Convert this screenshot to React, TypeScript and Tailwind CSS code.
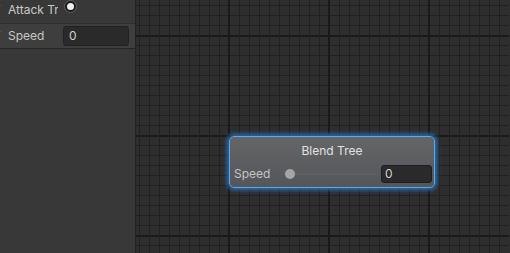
import React from 'react';

const CANVAS_X = 137;
const W = 510 - CANVAS_X;
const H = 253;

function Grid() {
  const xs: number[] = [];
  for (let x = 140; x < 510; x += 10) xs.push(x);
  const ys: number[] = [];
  for (let y = 5; y < 253; y += 10) ys.push(y);

  return (
    <svg className="absolute inset-0" width={W} height={H}>
      <rect width={W} height={H} fill="#2e2e2e" />
      {ys.map((y) => {
        const major = (y - 35) % 100 === 0;
        return (
          <rect key={'h' + y} x={0} y={y} width={W} height={major ? 2 : 1} fill={major ? '#191919' : '#212121'} />
        );
      })}
      {xs.map((x) => {
        const major = (x - 30) % 100 === 0;
        return (
          <rect key={'v' + x} x={x - CANVAS_X - (major ? 1 : 0)} y={0} width={major ? 2 : 1} height={H} fill={major ? '#191919' : '#212121'} />
        );
      })}
    </svg>
  );
}

export default function App() {
  return (
    <div
      className="flex w-[510px] h-[253px] overflow-hidden bg-[#2e2e2e] text-[12px]"
      style={{ fontFamily: 'Inter, "Noto Sans", sans-serif' }}
    >
      {/* Parameters panel */}
      <div className="w-[136px] shrink-0 bg-[#383838] border-r border-[#232323] flex flex-col">
        <div className="h-[24px] flex items-center border-b border-[#2e2e2e] pb-[3px]">
          <span className="text-[#6f6f6f] -ml-[6px] w-[14px]">F</span>
          <span className="text-[#c8c8c8] w-[50px] overflow-hidden whitespace-nowrap">Attack Tree</span>
          <span className="ml-[6px] -mt-[8px] w-[13px] h-[13px] rounded-full bg-[#1c1c1c] border border-[#606060] flex items-center justify-center">
            <span className="w-[7px] h-[7px] rounded-full bg-[#eeeeee]" />
          </span>
        </div>
        <div className="h-[25px] flex items-center bg-[#3e3e3e] border-b border-[#252525]">
          <span className="text-[#6f6f6f] -ml-[6px] w-[14px]">F</span>
          <span className="text-[#c8c8c8] w-[55px]">Speed</span>
          <div className="w-[66px] h-[20px] rounded-[3px] bg-[#2a2a2a] border border-[#212121] flex items-center pl-[5px] text-[#d2d2d2]">
            0
          </div>
        </div>
        <div className="flex-1" />
      </div>

      {/* Graph canvas */}
      <div className="relative flex-1">
        <Grid />
        <div className="absolute left-[93px] top-[136px] w-[206px] h-[52px] rounded-[5px] border border-[#5aa8f0] shadow-[0_0_4px_2px_#2a6fb8] bg-[linear-gradient(#646567,#55565a)] flex flex-col">
          <div className="h-[28px] flex items-center justify-center text-[#e2e2e2] text-[12px]">Blend Tree</div>
          <div className="flex items-center h-[18px] pl-[4px] pr-[2px]">
            <span className="text-[#c4c4c4] w-[50px]">Speed</span>
            <div className="relative flex-1 h-[18px] flex items-center mr-[4px]">
              <div className="w-full h-[2px] bg-[#5f6063]" />
              <div className="absolute left-[1px] top-[4px] w-[10px] h-[10px] rounded-full bg-[#a5a5a5]" />
            </div>
            <div className="w-[51px] h-[18px] rounded-[3px] bg-[#2a2a2a] border border-[#1f1f1f] flex items-center pl-[3px] text-[#d2d2d2]">
              0
            </div>
          </div>
        </div>
      </div>
    </div>
  );
}
